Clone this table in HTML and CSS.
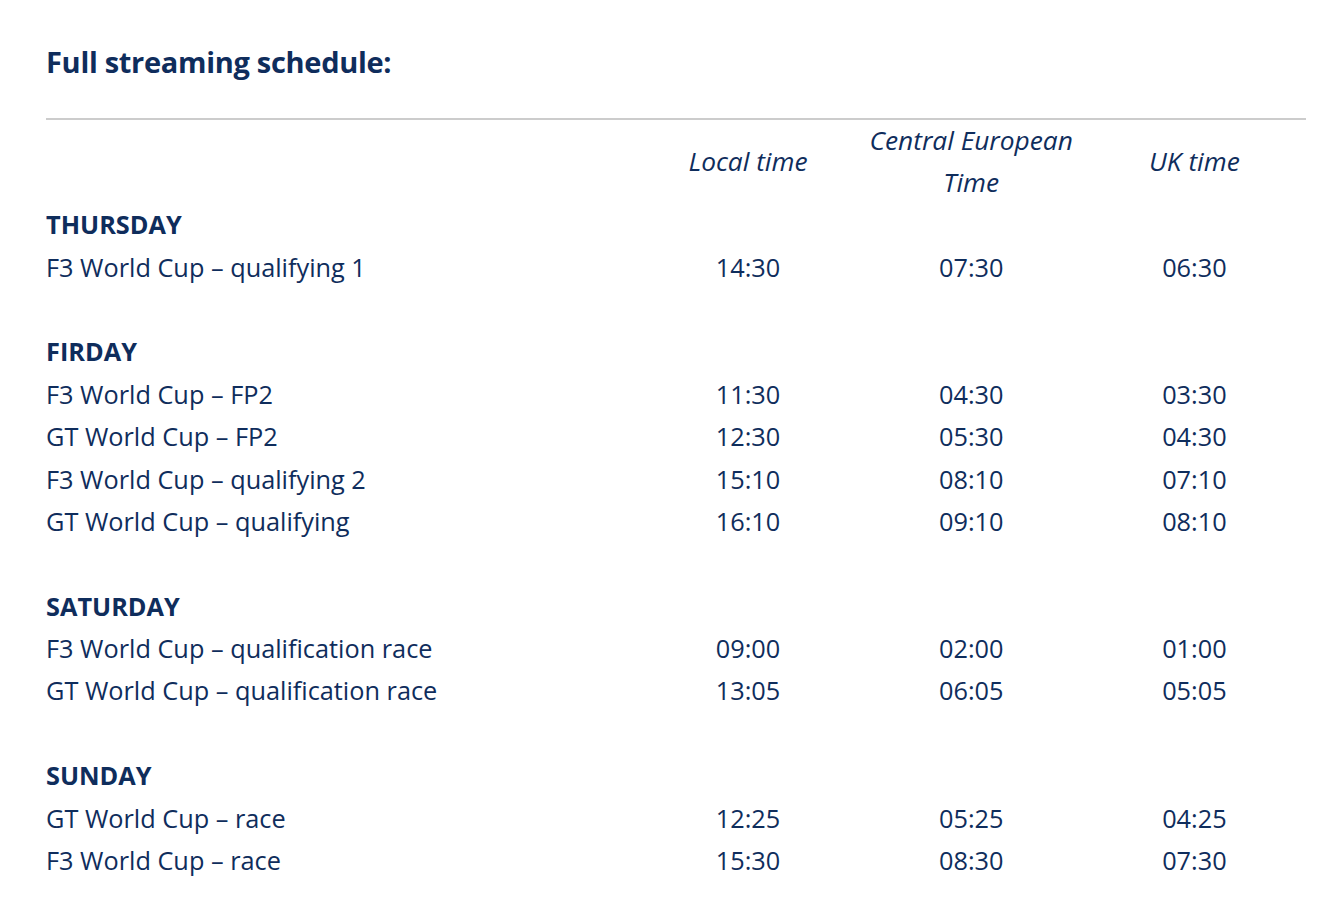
FILE: index.html
```html
<!DOCTYPE html>
<html lang="en">
<head>
<meta charset="utf-8">
<title>Full streaming schedule</title>
<link rel="stylesheet" href="styles.css">
</head>
<body>
<main class="page">
  <h2 class="title">Full streaming schedule:</h2>
  <hr class="rule">
  <table class="schedule">
    <colgroup>
      <col class="c-event">
      <col class="c-time">
      <col class="c-time">
      <col class="c-time">
    </colgroup>
    <thead>
      <tr class="head-row">
        <th></th>
        <th>Local time</th>
        <th>Central European<br>Time</th>
        <th>UK time</th>
      </tr>
    </thead>
    <tbody>
      <tr class="day"><td>THURSDAY</td><td></td><td></td><td></td></tr>
      <tr><td>F3 World Cup – qualifying 1</td><td>14:30</td><td>07:30</td><td>06:30</td></tr>
      <tr class="blank"><td></td><td></td><td></td><td></td></tr>
      <tr class="day"><td>FIRDAY</td><td></td><td></td><td></td></tr>
      <tr><td>F3 World Cup – FP2</td><td>11:30</td><td>04:30</td><td>03:30</td></tr>
      <tr><td>GT World Cup – FP2</td><td>12:30</td><td>05:30</td><td>04:30</td></tr>
      <tr><td>F3 World Cup – qualifying 2</td><td>15:10</td><td>08:10</td><td>07:10</td></tr>
      <tr><td>GT World Cup – qualifying</td><td>16:10</td><td>09:10</td><td>08:10</td></tr>
      <tr class="blank"><td></td><td></td><td></td><td></td></tr>
      <tr class="day"><td>SATURDAY</td><td></td><td></td><td></td></tr>
      <tr><td>F3 World Cup – qualification race</td><td>09:00</td><td>02:00</td><td>01:00</td></tr>
      <tr><td>GT World Cup – qualification race</td><td>13:05</td><td>06:05</td><td>05:05</td></tr>
      <tr class="blank"><td></td><td></td><td></td><td></td></tr>
      <tr class="day"><td>SUNDAY</td><td></td><td></td><td></td></tr>
      <tr><td>GT World Cup – race</td><td>12:25</td><td>05:25</td><td>04:25</td></tr>
      <tr><td>F3 World Cup – race</td><td>15:30</td><td>08:30</td><td>07:30</td></tr>
    </tbody>
  </table>
</main>
</body>
</html>
```
FILE: styles.css
```css
html, body {
  margin: 0;
  padding: 0;
  background: #ffffff;
}

body {
  font-family: "Open Sans", "Noto Sans", "Liberation Sans", sans-serif;
  color: #0f2d5c;
}

.page {
  padding: 42px 22px 0 46px;
}

.title {
  margin: 0;
  font-size: 29px;
  font-weight: 700;
  line-height: 40px;
  letter-spacing: -0.3px;
}

.rule {
  margin: 36px 0 0 0;
  border: 0;
  border-top: 2px solid #cccccc;
  height: 0;
}

.schedule {
  width: 1260px;
  border-collapse: collapse;
  table-layout: fixed;
  font-size: 25.3px;
  letter-spacing: 0;
}

.c-event { width: 590px; }
.c-time { width: 223px; }

.schedule td,
.schedule th {
  padding: 0;
  height: 42.4px;
  line-height: 42px;
  vertical-align: middle;
  text-align: center;
  white-space: nowrap;
}

.schedule td:first-child {
  text-align: left;
}

.head-row th {
  height: 83px;
  line-height: 41.5px;
  font-size: 26.3px;
  font-style: italic;
  font-weight: 400;
}

.day td {
  font-weight: 700;
}
```
